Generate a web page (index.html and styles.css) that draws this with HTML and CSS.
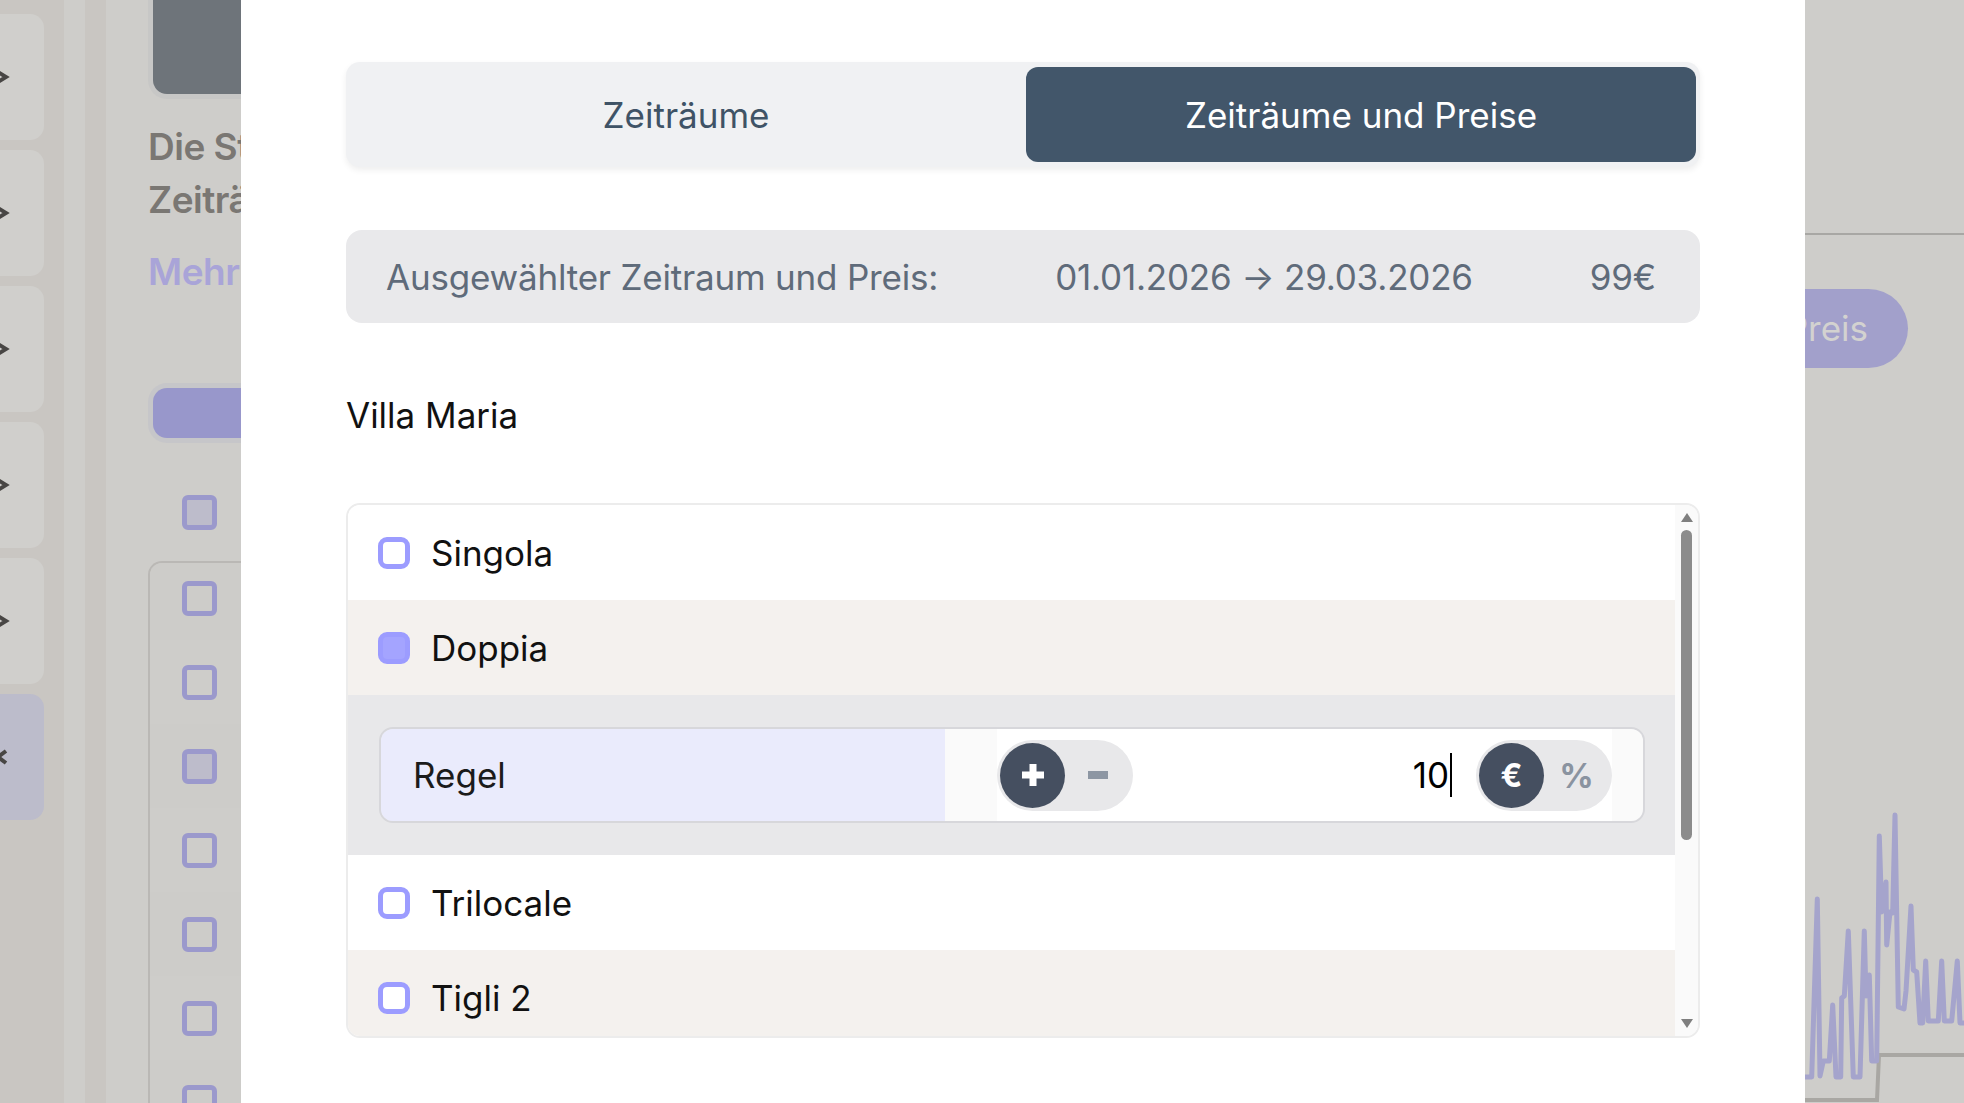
FILE: index.html
```html
<!DOCTYPE html>
<html lang="de">
<head>
  <meta charset="UTF-8">
  <title>Zeiträume und Preise</title>
  <link rel="stylesheet" href="styles.css">
</head>
<body>

<div class="page">

  <!-- Seite hinter dem Dialog, links -->
  <aside class="behind behind-left">
    <div class="side-nav">
      <div class="nav-card"><svg class="chev" viewBox="0 0 12 16"><path d="M-2 3l8 5-8 5"/></svg></div>
      <div class="nav-card"><svg class="chev" viewBox="0 0 12 16"><path d="M-2 3l8 5-8 5"/></svg></div>
      <div class="nav-card"><svg class="chev" viewBox="0 0 12 16"><path d="M-2 3l8 5-8 5"/></svg></div>
      <div class="nav-card"><svg class="chev" viewBox="0 0 12 16"><path d="M-2 3l8 5-8 5"/></svg></div>
      <div class="nav-card"><svg class="chev" viewBox="0 0 12 16"><path d="M-2 3l8 5-8 5"/></svg></div>
      <div class="nav-card nav-card-active"><svg class="chev" viewBox="0 0 12 16"><path d="M6 2l-8 6 8 6"/></svg></div>
    </div>
    <div class="strip strip-light"></div>
    <div class="strip strip-dark"></div>
    <div class="behind-main">
      <div class="dark-btn"></div>
      <p class="behind-title">Die Standard-<br>Zeiträume</p>
      <p class="behind-link">Mehr</p>
      <div class="purple-btn"></div>
      <div class="bg-check bg-check-filled head-check"></div>
      <div class="bg-list">
        <div class="bg-rows">
          <div class="bg-row"><span class="bg-check"></span></div>
          <div class="bg-row"><span class="bg-check"></span></div>
          <div class="bg-row"><span class="bg-check bg-check-filled"></span></div>
          <div class="bg-row"><span class="bg-check"></span></div>
          <div class="bg-row"><span class="bg-check"></span></div>
          <div class="bg-row"><span class="bg-check"></span></div>
          <div class="bg-row"><span class="bg-check"></span></div>
        </div>
      </div>
    </div>
  </aside>

  <!-- Dialog -->
  <section class="modal">
    <div class="tabs">
      <button class="tab">Zeiträume</button>
      <button class="tab tab-active">Zeiträume und Preise</button>
    </div>

    <div class="summary">
      <span>Ausgewählter Zeitraum und Preis:</span>
      <span>01.01.2026 → 29.03.2026</span>
      <span>99€</span>
    </div>

    <h2 class="property">Villa Maria</h2>

    <div class="rooms">
      <div class="room-list">
        <div class="room"><span class="check"></span>Singola</div>
        <div class="room room-alt"><span class="check check-on"></span>Doppia</div>

        <div class="rule-panel">
          <div class="rule">
            <div class="rule-label">Regel</div>
            <div class="rule-value">
              <div class="rule-inner">
                <div class="pill">
                  <span class="pill-btn pill-btn-on">
                    <svg width="26" height="26" viewBox="0 0 26 26"><path d="M13 2v22M2 13h22" stroke="#fff" stroke-width="7"/></svg>
                  </span>
                  <span class="pill-btn">
                    <svg width="20" height="8" viewBox="0 0 20 8"><rect width="20" height="8" fill="#8d96a3"/></svg>
                  </span>
                </div>
                <div class="amount">10<span class="caret"></span></div>
                <div class="pill">
                  <span class="pill-btn pill-btn-on unit">€</span>
                  <span class="pill-btn unit unit-off">%</span>
                </div>
              </div>
            </div>
          </div>
        </div>

        <div class="room"><span class="check"></span>Trilocale</div>
        <div class="room room-alt"><span class="check"></span>Tigli 2</div>
        <div class="room"><span class="check"></span>Tigli 3</div>
      </div>
      <div class="scrollbar">
        <span class="arrow-up"></span>
        <span class="thumb"></span>
        <span class="arrow-down"></span>
      </div>
    </div>
  </section>

  <!-- Seite hinter dem Dialog, rechts -->
  <aside class="behind behind-right">
    <div class="right-head"></div>
    <div class="price-btn">Preis</div>
    <svg class="chart" viewBox="1805 773 159 330">
      <polyline class="chart-base" points="1805,1100 1877,1100 1879,1055 1964,1055"/>
      <polyline class="chart-line" points="1805,1077 1811.7,1077 1817.3,899 1820,1076 1823.3,1061 1829.3,1061 1832.7,1005 1836,1077 1840.7,1077 1841.7,998 1844.3,996 1848.3,931 1853.3,1077 1860,1077 1864.3,931 1866,996 1869.3,975 1871.7,1061 1876.7,1061 1879.3,836 1881.7,912 1886,882 1886.7,945 1890,912 1892.7,913 1895,815 1898.3,1007 1904,1009 1906,991 1911,906 1913.3,970 1916.7,972 1920,1023 1922.7,1023 1925.7,961 1928.3,1021 1938.3,1021 1941.7,961 1944.3,1021 1951.7,1021 1957.3,961 1960,1023 1964,1023"/>
    </svg>
  </aside>

</div>

</body>
</html>
```

FILE: styles.css
```css
body { margin:0; font-family: Inter, "Noto Sans", sans-serif; background:#cecdca; }
.page { display:flex; height:1103px; overflow:hidden; }

/* ---- hinter dem Dialog ---- */
.behind { flex:none; overflow:hidden; background:#cecdca; }
.behind-left { width:241px; display:flex; }
.side-nav { width:64px; flex:none; background:#c9c6c2; padding-top:14px; display:flex; flex-direction:column; gap:10px; }
.nav-card { width:44px; height:126px; background:#d0cfcc; border-radius:0 14px 14px 0; display:flex; align-items:center; }
.nav-card-active { background:#bcbccb; }
.chev { width:12px; height:16px; overflow:visible; }
.chev path { fill:none; stroke:#484644; stroke-width:4; }
.strip { width:21px; flex:none; }
.strip-light { background:#cecdca; }
.strip-dark { background:#c9c6c2; }
.behind-main { width:135px; flex:none; }
.dark-btn { width:200px; height:94px; margin-left:47px; background:#6e747a; border-radius:0 0 0 14px; box-shadow:0 0 0 5px #c7c7c6; }
.behind-title { margin:26px 0 0 42px; font-size:37px; font-weight:600; letter-spacing:-0.5px; line-height:53px; color:#7a7773; white-space:nowrap; }
.behind-link { margin:19px 0 0 42px; font-size:37px; font-weight:600; letter-spacing:-0.5px; line-height:53px; color:#a9a4d8; white-space:nowrap; }
.purple-btn { width:300px; height:50px; margin:90px 0 0 47px; background:#9897cb; border-radius:14px; box-shadow:0 0 0 5px #c6c6c9; }
.bg-check { display:block; width:25px; height:25px; border:5px solid #9b99cc; border-radius:6px; }
.bg-check-filled { background:#bdbccb; }
.head-check { margin:57px 0 0 76px; }
.bg-list { width:300px; margin:31px 0 0 42px; height:600px; border:2px solid #bab8b5; border-right:none; border-radius:14px 0 0 0; overflow:hidden; }
.bg-rows { margin-top:-7px; }
.bg-row { height:84px; display:flex; align-items:center; padding-left:32px; }
.bg-row:nth-child(odd) { background:#cdccc9; }

.behind-right { width:159px; display:flex; flex-direction:column; }
.right-head { height:233px; flex:none; border-bottom:2px solid #a8a7a4; }
.price-btn { flex:none; margin:54px 0 0 -80px; width:183px; height:79px; box-sizing:border-box; padding-right:40px; background:#a2a0cb; border-radius:40px; color:#d3d2d0; font-size:35px; line-height:79px; text-align:right; white-space:nowrap; }
.chart { display:block; margin-top:auto; width:159px; height:330px; }
.chart-base { fill:none; stroke:#a9a7a3; stroke-width:4; }
.chart-line { fill:none; stroke:#a5a4cc; stroke-width:5; stroke-linejoin:round; }

/* ---- Dialog ---- */
.modal { width:1564px; flex:none; box-sizing:border-box; padding:62px 105px 0; background:#fff; }

.tabs { display:flex; gap:5px; height:105px; box-sizing:border-box; padding:5px 4px 5px 5px; background:#f0f1f3; border-radius:14px; box-shadow:0 3px 6px rgba(0,0,0,0.07); }
.tab { flex:1; border:none; background:none; font-family:inherit; font-size:35px; color:#3f5366; border-radius:12px; cursor:pointer; }
.tab-active { background:#42566a; color:#fff; }

.summary { margin-top:63px; height:93px; display:flex; justify-content:space-between; align-items:center; padding:0 44px 0 40px; background:#e9e9eb; border-radius:16px; font-size:35px; letter-spacing:-0.2px; color:#5f6b7a; }

.property { margin:71px 0 0; font-size:35px; font-weight:400; line-height:42px; color:#111; }

.rooms { margin-top:67px; height:535px; box-sizing:border-box; display:flex; border:2px solid #ececec; border-radius:14px; overflow:hidden; }
.room-list { flex:1; overflow:hidden; }
.room { height:95px; display:flex; align-items:center; gap:21px; padding-left:30px; font-size:35px; color:#111; background:#fff; }
.room-alt { background:#f4f1ee; }
.check { width:22px; height:22px; border:5px solid #9c9cff; border-radius:9px; background:#fff; }
.check-on { background:#a4a4ff; }

.rule-panel { background:#e8e8ea; padding:32px 30px 32px 31px; }
.rule { display:flex; height:96px; box-sizing:border-box; border:2px solid #d7d7db; border-radius:14px; overflow:hidden; }
.rule-label { width:564px; display:flex; align-items:center; padding-left:32px; box-sizing:border-box; background:#eaebfc; font-size:35px; color:#1b1b1b; }
.rule-value { flex:1; display:flex; padding:0 31px 0 52px; background:#fafafa; }
.rule-inner { flex:1; display:flex; align-items:center; background:#fff; }
.pill { display:flex; align-items:center; height:71px; padding:0 3px; box-sizing:border-box; background:#e8e8ea; border-radius:36px; }
.pill-btn { width:65px; height:65px; display:flex; align-items:center; justify-content:center; border-radius:50%; }
.pill-btn-on { background:#454f60; }
.unit { font-size:32px; font-weight:700; color:#fff; }
.unit-off { color:#8a93a0; font-size:34px; }
.amount { flex:1; display:flex; align-items:center; justify-content:flex-end; padding-right:24px; font-size:35px; color:#000; }
.caret { width:2px; height:44px; margin-left:1px; background:#000; }

.scrollbar { width:23px; flex:none; display:flex; flex-direction:column; align-items:center; background:#fafafa; }
.arrow-up { margin-top:8px; border:6px solid transparent; border-top:none; border-bottom:9px solid #7f7f7f; }
.thumb { width:11px; height:310px; margin-top:8px; background:#8c8c8c; border-radius:6px; }
.arrow-down { margin-top:auto; margin-bottom:8px; border:6px solid transparent; border-bottom:none; border-top:9px solid #7f7f7f; }
```
